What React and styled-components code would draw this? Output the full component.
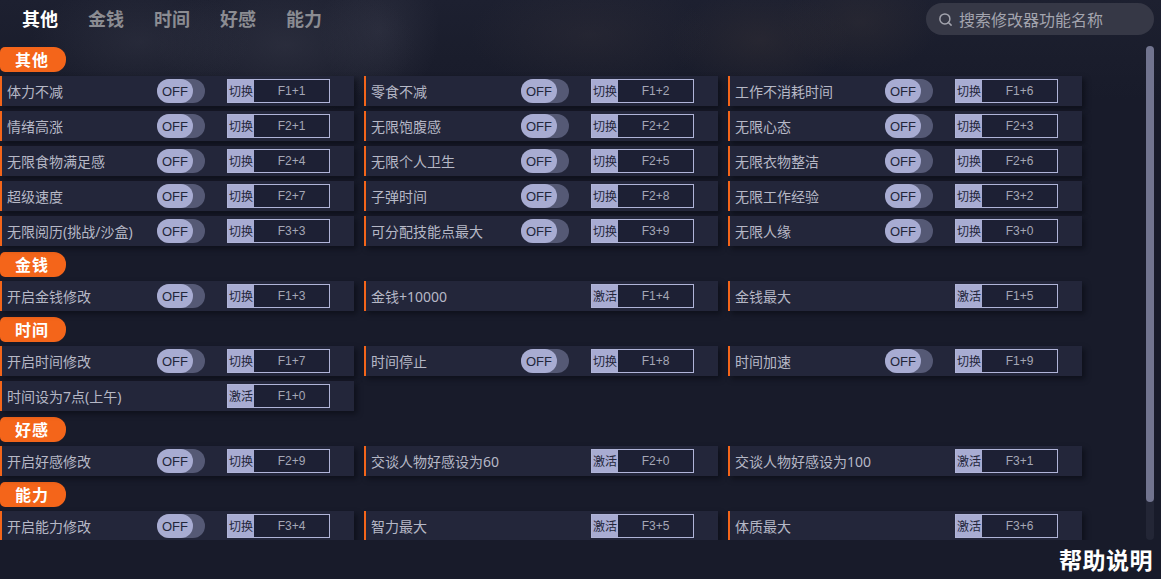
import React from "react";
import styled, { createGlobalStyle } from "styled-components";
import { Search } from "lucide-react";

const GlobalStyles = createGlobalStyle`
  html, body {
    margin: 0;
    padding: 0;
    height: 100%;
    background: #181b2a;
    font-family: "Noto Sans CJK SC", "Liberation Sans", sans-serif;
  }
  #root { height: 100%; }
  * { box-sizing: border-box; }
`;

const Page = styled.main`
  position: relative;
  width: 1161px;
  height: 579px;
  overflow: hidden;
  background:
    radial-gradient(ellipse 110px 58px at 140px 42px, rgba(62, 64, 80, 0.34), transparent),
    radial-gradient(ellipse 130px 70px at 285px 45px, rgba(62, 64, 80, 0.42), transparent),
    radial-gradient(ellipse 60px 70px at 380px 30px, rgba(62, 64, 80, 0.36), transparent),
    radial-gradient(ellipse 120px 55px at 590px 35px, rgba(56, 52, 60, 0.32), transparent),
    radial-gradient(ellipse 90px 50px at 760px 40px, rgba(58, 52, 56, 0.38), transparent),
    radial-gradient(ellipse 80px 50px at 860px 22px, rgba(60, 54, 56, 0.32), transparent),
    linear-gradient(180deg, #1d2030 0, #1a1d2c 60px, #181b2a 100px, #181b2a 100%);
`;

const TopBar = styled.header`
  display: flex;
  align-items: flex-start;
  justify-content: space-between;
  height: 47px;
  padding: 3px 7px 0 22px;
`;

const Tabs = styled.nav`
  display: flex;
  gap: 30px;
`;

const Tab = styled.span`
  font-size: 18px;
  line-height: 31px;
  font-weight: 700;
  color: ${({ $active }) => ($active ? "#ffffff" : "#8b8c92")};
`;

const SearchBox = styled.div`
  display: flex;
  align-items: center;
  gap: 6px;
  width: 228px;
  height: 32px;
  padding-left: 12px;
  border-radius: 16px;
  background: #363846;
  color: #a3a4ae;
  font-size: 16px;
`;

const Body = styled.div`
  display: flex;
  justify-content: space-between;
  padding-right: 7px;
`;

const Content = styled.div`
  width: 1092px;
  height: 493px;
  overflow: hidden;
`;

const Section = styled.section`
  margin-bottom: 6px;
`;

const Pill = styled.h2`
  width: 66px;
  height: 25px;
  margin: 0 0 4px;
  padding-right: 2px;
  border-radius: 5px 12px 12px 5px;
  background: #f4651a;
  color: #ffffff;
  font-size: 16px;
  font-weight: 700;
  line-height: 24px;
  text-align: center;
  letter-spacing: 1px;
`;

const Grid = styled.div`
  display: grid;
  grid-template-columns: repeat(3, 354px);
  column-gap: 10px;
  row-gap: 5px;
`;

const Row = styled.div`
  display: flex;
  align-items: center;
  height: 30px;
  padding-left: 5px;
  border-left: 2px solid #f4651a;
  background: #23263a;
  box-shadow: 3px 3px 5px rgba(8, 9, 16, 0.55);
`;

const Label = styled.span`
  flex: 1;
  min-width: 0;
  color: #b6b8c6;
  font-family: "Noto Sans", "Noto Sans CJK SC", sans-serif;
  font-size: 14px;
  white-space: nowrap;
`;

const Toggle = styled.div`
  position: relative;
  width: 48px;
  height: 24px;
  margin-right: 22px;
  border-radius: 12px;
  background: #555975;
`;

const Knob = styled.span`
  position: absolute;
  left: 0;
  top: 0;
  width: 36px;
  height: 24px;
  border-radius: 12px;
  background: #a8acd2;
  color: #23263a;
  font-family: "Liberation Sans", sans-serif;
  font-size: 13px;
  line-height: 25px;
  text-align: center;
`;

const KeyBind = styled.div`
  display: flex;
  width: 103px;
  height: 24px;
  margin-right: 24px;
  border: 1px solid #b0b4d8;
`;

const KeyMode = styled.span`
  width: 26px;
  background: #a8acd2;
  color: #23263a;
  font-size: 12px;
  line-height: 21px;
  text-align: center;
  white-space: nowrap;
`;

const KeyName = styled.span`
  flex: 1;
  background: #1d2034;
  color: #a5a7b6;
  font-family: "Liberation Sans", sans-serif;
  font-size: 12px;
  line-height: 22px;
  text-align: center;
`;

const ScrollTrack = styled.div`
  position: relative;
  width: 8px;
  height: 494px;
  margin-top: -1px;
  border-radius: 4px;
  background: #232636;
`;

const ScrollThumb = styled.div`
  height: 456px;
  border-radius: 4px;
  background: #71748f;
`;

const HelpLink = styled.a`
  position: absolute;
  right: 8px;
  bottom: 4px;
  color: #ffffff;
  font-size: 23px;
  font-weight: 700;
  line-height: 32px;
  letter-spacing: 0.5px;
`;

const t = (label, key) => ({ label, key, toggle: true });
const a = (label, key) => ({ label, key, toggle: false });

const sections = [
  {
    title: "其他",
    items: [
      t("体力不减", "F1+1"), t("零食不减", "F1+2"), t("工作不消耗时间", "F1+6"),
      t("情绪高涨", "F2+1"), t("无限饱腹感", "F2+2"), t("无限心态", "F2+3"),
      t("无限食物满足感", "F2+4"), t("无限个人卫生", "F2+5"), t("无限衣物整洁", "F2+6"),
      t("超级速度", "F2+7"), t("子弹时间", "F2+8"), t("无限工作经验", "F3+2"),
      t("无限阅历(挑战/沙盒)", "F3+3"), t("可分配技能点最大", "F3+9"), t("无限人缘", "F3+0"),
    ],
  },
  {
    title: "金钱",
    items: [t("开启金钱修改", "F1+3"), a("金钱+10000", "F1+4"), a("金钱最大", "F1+5")],
  },
  {
    title: "时间",
    items: [
      t("开启时间修改", "F1+7"), t("时间停止", "F1+8"), t("时间加速", "F1+9"),
      a("时间设为7点(上午)", "F1+0"),
    ],
  },
  {
    title: "好感",
    items: [t("开启好感修改", "F2+9"), a("交谈人物好感设为60", "F2+0"), a("交谈人物好感设为100", "F3+1")],
  },
  {
    title: "能力",
    items: [t("开启能力修改", "F3+4"), a("智力最大", "F3+5"), a("体质最大", "F3+6")],
  },
];

const tabs = ["其他", "金钱", "时间", "好感", "能力"];

function CheatRow({ item }) {
  return (
    <Row>
      <Label>{item.label}</Label>
      {item.toggle && (
        <Toggle>
          <Knob>OFF</Knob>
        </Toggle>
      )}
      <KeyBind>
        <KeyMode>{item.toggle ? "切换" : "激活"}</KeyMode>
        <KeyName>{item.key}</KeyName>
      </KeyBind>
    </Row>
  );
}

export default function App() {
  return (
    <Page>
      <GlobalStyles />
      <TopBar>
        <Tabs>
          {tabs.map((tab, i) => (
            <Tab key={tab} $active={i === 0}>{tab}</Tab>
          ))}
        </Tabs>
        <SearchBox>
          <Search size={15} strokeWidth={2.4} />
          搜索修改器功能名称
        </SearchBox>
      </TopBar>
      <Body>
        <Content>
          {sections.map((section) => (
            <Section key={section.title}>
              <Pill>{section.title}</Pill>
              <Grid>
                {section.items.map((item) => (
                  <CheatRow key={item.key} item={item} />
                ))}
              </Grid>
            </Section>
          ))}
        </Content>
        <ScrollTrack>
          <ScrollThumb />
        </ScrollTrack>
      </Body>
      <HelpLink>帮助说明</HelpLink>
    </Page>
  );
}
